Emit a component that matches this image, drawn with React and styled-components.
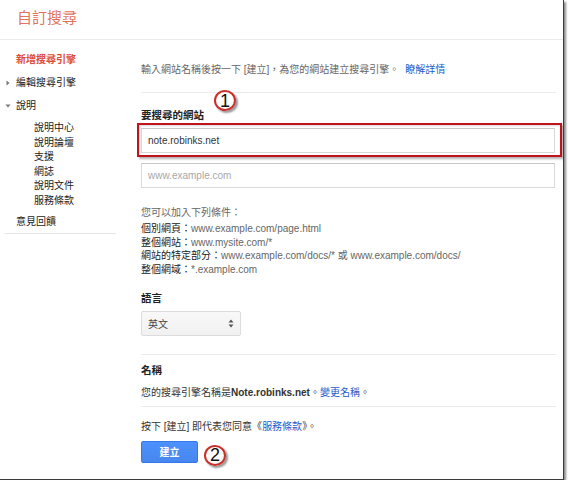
import React from "react"
import styled, { createGlobalStyle } from "styled-components"

const GlobalStyle = createGlobalStyle`
  body {
    margin: 0;
    background: #fff;
    font-family: "Liberation Sans", "Noto Sans CJK TC", sans-serif;
    font-size: 10px;
    color: #222;
  }
`

const Frame = styled.div`
  width: 563px;
  height: 479px;
  border-right: 1px solid #3c3c3c;
  border-bottom: 1px solid #3c3c3c;
  box-shadow: 2px 2px 2px rgba(0, 0, 0, 0.45);
  background: #fff;
  overflow: hidden;
`

const Header = styled.header`
  height: 40px;
  border-bottom: 1px solid #ebebeb;
  box-sizing: border-box;
  padding: 8px 0 0 17px;
`

const Title = styled.h1`
  margin: 0;
  font-size: 15px;
  line-height: 20px;
  font-weight: normal;
  color: #e2735c;
`

const Body = styled.div`
  display: grid;
  grid-template-columns: 141px 415px;
`

const Nav = styled.nav`
  padding: 12px 0 0 5px;
`

const NavList = styled.div`
  width: 111px;
  padding-bottom: 3px;
  border-bottom: 1px solid #e5e5e5;
`

const NavItem = styled.div`
  display: flex;
  align-items: center;
  line-height: 16px;
  margin-bottom: ${(p) => (p.$last ? "0" : "7px")};
  color: ${(p) => (p.$active ? "#dd4b39" : "#222")};
  font-weight: ${(p) => (p.$active ? "bold" : "normal")};
`

const Toggle = styled.span`
  width: 11px;
  flex: none;
  display: flex;
  align-items: center;
  color: #777;
`

const SubList = styled.div`
  margin: 0 0 5px 29px;
`

const SubItem = styled.div`
  line-height: 14.6px;
  color: #222;
`

const Main = styled.main`
  position: relative;
  padding-top: 22px;
`

const Intro = styled.div`
  line-height: 16px;
  color: #666;
  padding-bottom: 14px;
  border-bottom: 1px solid #ebebeb;
`

const Link = styled.a`
  color: #1a5ccc;
  text-decoration: none;
  margin-left: ${(p) => p.$gap || 0}px;
`

const Section = styled.section`
  padding: ${(p) => p.$pad || "0"};
  border-bottom: ${(p) => (p.$divider ? "1px solid #ebebeb" : "none")};
`

const Label = styled.div`
  font-weight: bold;
  font-size: 10.5px;
  line-height: 16px;
  color: #222;
  margin-top: ${(p) => p.$top || 0}px;
  margin-bottom: ${(p) => p.$bottom ?? 5}px;
`

const InputWrap = styled.div`
  position: relative;
  margin-top: ${(p) => p.$top || 0}px;
`

const TextInput = styled.div`
  box-sizing: border-box;
  height: 25px;
  width: 414px;
  border: 1px solid #d9d9d9;
  border-top-color: #c8c8c8;
  padding: 0 6px;
  line-height: 23px;
  color: ${(p) => (p.$placeholder ? "#a8a8a8" : "#333")};
`

const Highlight = styled.span`
  position: absolute;
  left: -4px;
  right: -6px;
  top: -5px;
  bottom: -4px;
  border: 2px solid #c2121c;
  box-shadow: 2px 2px 2px rgba(0, 0, 0, 0.3), inset 1px 1px 2px rgba(0, 0, 0, 0.15);
`

const Hint = styled.div`
  margin-top: 17px;
  line-height: 16px;
  color: #666;
`

const Examples = styled.div`
  margin-top: 1px;
  line-height: 13.7px;
`

const ExKey = styled.span`
  color: #222;
`

const ExVal = styled.span`
  color: #666;
`

const Select = styled.div`
  box-sizing: border-box;
  width: 100px;
  height: 25px;
  display: flex;
  align-items: center;
  justify-content: space-between;
  padding: 0 6px 0 6px;
  border: 1px solid #dcdcdc;
  border-radius: 2px;
  background: linear-gradient(#f8f8f8, #f1f1f1);
  color: #444;
`

const Text = styled.div`
  line-height: 16px;
  color: #333;
`

const ButtonRow = styled.div`
  position: relative;
  margin-top: 6px;
`

const Button = styled.button`
  width: 57px;
  height: 22px;
  padding: 0;
  border: 1px solid #3079ed;
  border-radius: 2px;
  background: linear-gradient(#4d90fe, #4787ed);
  color: #fff;
  font-family: inherit;
  font-size: 10px;
  font-weight: bold;
`

const Marker = styled.span`
  position: absolute;
  left: ${(p) => p.$x}px;
  top: ${(p) => p.$y}px;
  width: 22px;
  height: 21px;
  box-sizing: border-box;
  border-radius: 50%;
  border: 2px solid #c9302c;
  background: radial-gradient(circle at 40% 35%, #fff 55%, #e6e6e6);
  box-shadow: 2px 2px 2px rgba(0, 0, 0, 0.4);
  display: flex;
  align-items: center;
  justify-content: center;
  font-family: "Liberation Sans", sans-serif;
  font-size: 18px;
  line-height: 1;
  color: #111;
`

const Arrow = ({ down }) => (
  <svg width="6" height="6" viewBox="0 0 6 6">
    {down ? <path d="M0.5 1.5 L5.5 1.5 L3 4.5 Z" fill="#777" /> : <path d="M1.5 0.5 L4.5 3 L1.5 5.5 Z" fill="#777" />}
  </svg>
)

const UpDown = () => (
  <svg width="6" height="9" viewBox="0 0 6 9">
    <path d="M0.5 3.5 L3 0.5 L5.5 3.5 Z" fill="#555" />
    <path d="M0.5 5.5 L3 8.5 L5.5 5.5 Z" fill="#555" />
  </svg>
)

const helpLinks = ["說明中心", "說明論壇", "支援", "網誌", "說明文件", "服務條款"]

const examples = [
  ["個別網頁：", "www.example.com/page.html"],
  ["整個網站：", "www.mysite.com/*"],
  ["網站的特定部分：", "www.example.com/docs/* 或 www.example.com/docs/"],
  ["整個網域：", "*.example.com"],
]

const App = () => {
  return (
    <Frame>
      <GlobalStyle />
      <Header>
        <Title>自訂搜尋</Title>
      </Header>
      <Body>
        <Nav>
          <NavList>
            <NavItem $active>
              <Toggle />
              新增搜尋引擎
            </NavItem>
            <NavItem>
              <Toggle>
                <Arrow />
              </Toggle>
              編輯搜尋引擎
            </NavItem>
            <NavItem>
              <Toggle>
                <Arrow down />
              </Toggle>
              說明
            </NavItem>
            <SubList>
              {helpLinks.map((l) => (
                <SubItem key={l}>{l}</SubItem>
              ))}
            </SubList>
            <NavItem $last>
              <Toggle />
              意見回饋
            </NavItem>
          </NavList>
        </Nav>

        <Main>
          <Intro>
            輸入網站名稱後按一下 [建立]，為您的網站建立搜尋引擎。
            <Link href="#" $gap={6}>
              瞭解詳情
            </Link>
          </Intro>

          <Section $pad="14px 0 18px" $divider>
            <Label>要搜尋的網站</Label>
            <InputWrap>
              <TextInput>note.robinks.net</TextInput>
              <Highlight />
            </InputWrap>
            <InputWrap $top={10}>
              <TextInput $placeholder>www.example.com</TextInput>
            </InputWrap>
            <Hint>您可以加入下列條件：</Hint>
            <Examples>
              {examples.map(([k, v]) => (
                <div key={k}>
                  <ExKey>{k}</ExKey>
                  <ExVal>{v}</ExVal>
                </div>
              ))}
            </Examples>
            <Label $top={13}>語言</Label>
            <Select>
              英文
              <UpDown />
            </Select>
          </Section>

          <Section $pad="7px 0 5px" $divider>
            <Label $bottom={7}>名稱</Label>
            <Text>
              您的搜尋引擎名稱是<b>Note.robinks.net</b>。
              <Link href="#">變更名稱</Link>。
            </Text>
          </Section>

          <Section $pad="12px 0 0">
            <Text>
              按下 [建立] 即代表您同意《<Link href="#">服務條款</Link>》。
            </Text>
            <ButtonRow>
              <Button>建立</Button>
              <Marker $x={63} $y={4}>2</Marker>
            </ButtonRow>
          </Section>

          <Marker $x={73} $y={50}>1</Marker>
        </Main>
      </Body>
    </Frame>
  )
}

export default App
